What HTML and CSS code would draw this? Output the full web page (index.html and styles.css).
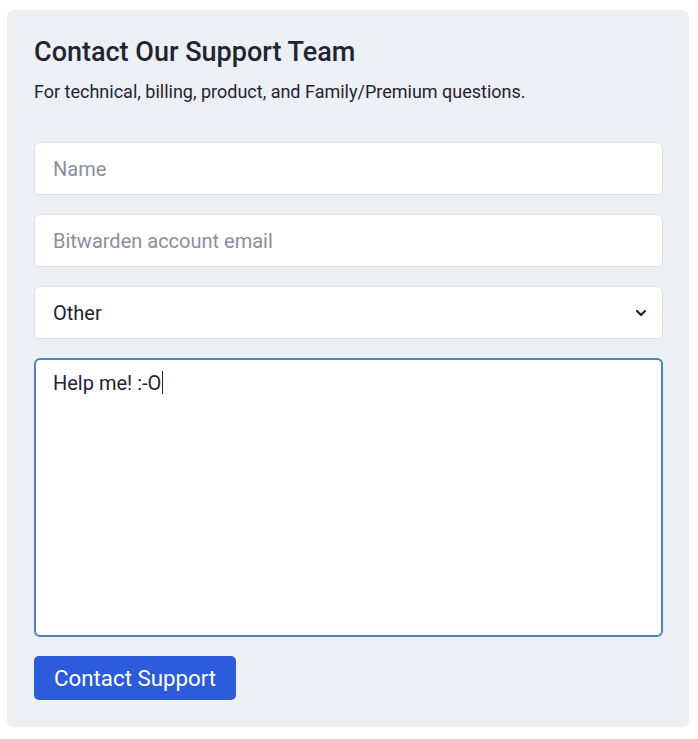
FILE: index.html
```html
<!DOCTYPE html>
<html lang="en">
<head>
    <meta charset="UTF-8">
    <meta name="viewport" content="width=device-width, initial-scale=1.0">
    <title>Contact Support</title>
    <link rel="stylesheet" href="styles.css">
</head>
<body>
    <form class="support-card" onsubmit="return false">
        <h1>Contact Our Support Team</h1>
        <p class="intro">For technical, billing, product, and Family/Premium questions.</p>

        <div class="fields">
            <input type="text" class="field" placeholder="Name" aria-label="Name">
            <input type="email" class="field" placeholder="Bitwarden account email" aria-label="Email">
            <div class="select-wrap">
                <select class="field" aria-label="Topic">
                    <option>Technical</option>
                    <option>Billing</option>
                    <option>Product</option>
                    <option selected>Other</option>
                </select>
                <svg class="chevron" width="12" height="8" viewBox="0 0 12 8" aria-hidden="true">
                    <path d="M2 2l4 4 4-4" fill="none" stroke="#1f2433" stroke-width="2.2" stroke-linecap="round" stroke-linejoin="round"/>
                </svg>
            </div>
            <div class="field message" role="textbox" aria-multiline="true" contenteditable="true">Help me! :-O<span class="caret"></span></div>
        </div>

        <button type="submit" class="submit">Contact Support</button>
    </form>
</body>
</html>
```

FILE: styles.css
```css
body {
    margin: 10px 9px 0 7px;
    font-family: Roboto, "Liberation Sans", sans-serif;
    background-color: #fff;
    color: #1f2433;
}

.support-card {
    background-color: #eceff4;
    border-radius: 6px;
    padding: 25px 26px 27px 27px;
}

h1 {
    margin: 0;
    font-size: 27px;
    font-weight: 500;
    line-height: 34px;
}

.intro {
    margin: 11px 0 0 0;
    font-size: 18px;
    line-height: 24px;
}

.fields {
    display: flex;
    flex-direction: column;
    gap: 19px;
    margin-top: 38px;
}

.field {
    box-sizing: border-box;
    width: 100%;
    height: 53px;
    padding: 0 18px;
    font-family: inherit;
    font-size: 20px;
    color: #1f2433;
    background-color: #fff;
    border: 1px solid #dde1e8;
    border-radius: 6px;
    outline: none;
}

.field::placeholder {
    color: #8a8f9c;
}

.select-wrap {
    position: relative;
}

.select-wrap select {
    appearance: none;
    -webkit-appearance: none;
}

.chevron {
    position: absolute;
    right: 16px;
    top: 23px;
    pointer-events: none;
}

.message {
    height: 279px;
    padding: 9px 17px;
    line-height: 28px;
    border: 2px solid #4f82c3;
}

.caret {
    display: inline-block;
    width: 1px;
    height: 23px;
    margin-left: 1px;
    vertical-align: -4px;
    background-color: #1f2433;
}

.submit {
    margin-top: 19px;
    height: 44px;
    padding: 0 20px;
    font-family: inherit;
    font-size: 22.3px;
    color: #fff;
    background-color: #2c5cdb;
    border: none;
    border-radius: 5px;
    cursor: pointer;
}
```
